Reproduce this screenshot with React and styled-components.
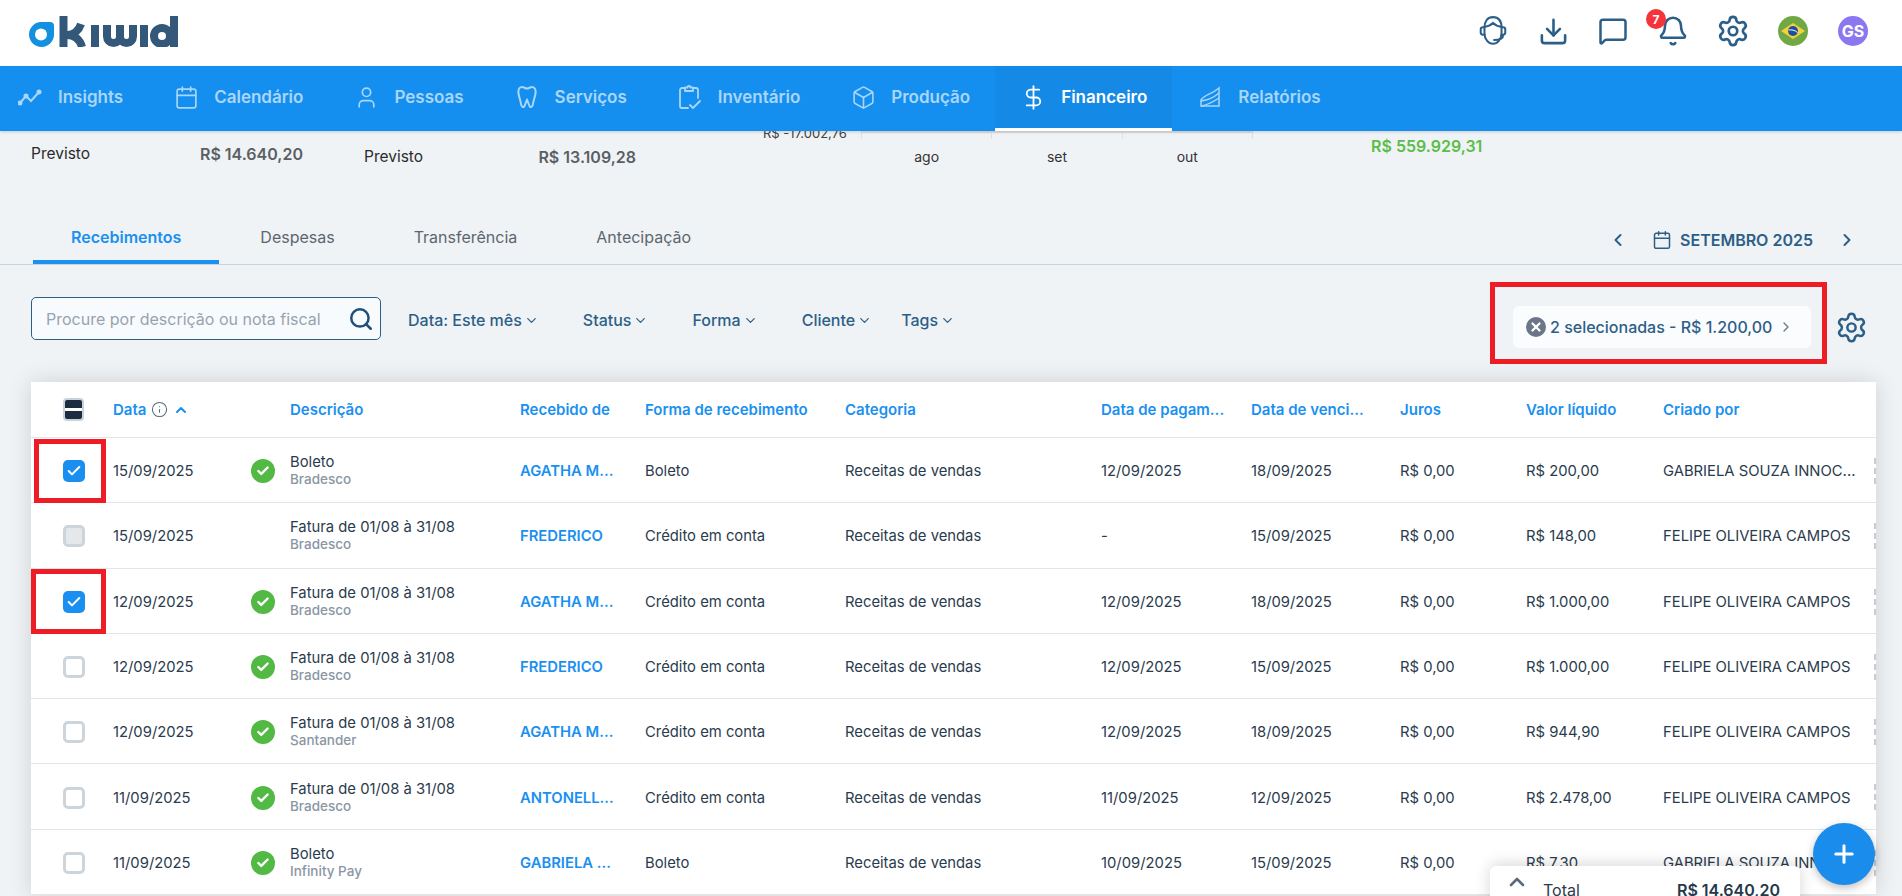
import React from 'react'
import styled, { createGlobalStyle } from 'styled-components'
import {
  Bell, Box, Calendar, Check, ChevronDown, ChevronLeft, ChevronRight, ChevronUp,
  DollarSign, Download, Info, MessageSquare, Plus, Search, Settings, User, X,
} from 'lucide-react'

const GlobalStyle = createGlobalStyle`
  html, body { margin: 0; height: 100%; overflow: hidden; }
  body { background: #f0f3f5; font-family: Inter, "Liberation Sans", sans-serif; color: #2a3b4d; }
  * { box-sizing: border-box; }
  svg { flex-shrink: 0; }
`

const Page = styled.div`
  position: relative;
  height: 896px;
  overflow: hidden;
`

const TopBar = styled.header`
  height: 66px;
  background: #fff;
  display: flex;
  align-items: flex-start;
  justify-content: space-between;
  padding: 16px 34px 0 28px;
`

const TopActions = styled.div`
  display: flex;
  gap: 30px;
  color: #2c5f88;
`

const TopIcon = styled.div`
  position: relative;
  width: 30px;
  height: 30px;
  display: flex;
  align-items: center;
  justify-content: center;
`

const Badge = styled.span`
  position: absolute;
  top: -7px;
  left: -12px;
  width: 20px;
  height: 20px;
  border-radius: 50%;
  background: #f5333a;
  color: #fff;
  font-size: 12px;
  font-weight: 700;
  display: flex;
  align-items: center;
  justify-content: center;
`

const Avatar = styled.div`
  width: 30px;
  height: 30px;
  border-radius: 50%;
  background: #8b78f0;
  color: #fff;
  font-size: 16px;
  font-weight: 700;
  display: flex;
  align-items: center;
  justify-content: center;
`

const Nav = styled.nav`
  position: relative;
  z-index: 2;
  height: 65px;
  background: #158fef;
  display: flex;
  padding-left: 18px;
  box-shadow: 0 1px 3px rgba(0, 0, 0, 0.16);
`

const NavItem = styled.a`
  display: flex;
  align-items: center;
  gap: 16px;
  padding: 0 25px 0 26px;
  font-size: 17px;
  font-weight: 600;
  color: ${({ $active }) => ($active ? '#fff' : '#a9d6fb')};
  background: ${({ $active }) => ($active ? '#1589e6' : 'transparent')};
  border-bottom: 3px solid ${({ $active }) => ($active ? '#fff' : 'transparent')};

  &:first-child { padding-left: 0; }
`

const NavIconBox = styled.span`
  width: 24px;
  display: flex;
  justify-content: center;
`

const SummaryStrip = styled.section`
  height: 79px;
  overflow: hidden;
  display: flex;
  align-items: flex-start;
  padding-left: 31px;
`

const SummaryPair = styled.div`
  width: 272px;
  display: flex;
  justify-content: space-between;
  padding-top: ${({ $top }) => $top}px;
  margin-right: ${({ $gap }) => $gap}px;
  font-size: 15.5px;
  line-height: 20px;
  color: #2b2b2b;
`

const SummaryValue = styled.span`
  font-size: 16px;
  font-weight: 600;
  color: #5a5f66;
`

const ClippedValue = styled.div`
  width: 98px;
  margin-top: -6px;
  font-size: 13px;
  line-height: 16px;
  color: #444;
`

const ChartAxis = styled.div`
  width: 392px;
  display: flex;
  margin-right: 118px;
`

const ChartCell = styled.div`
  flex: 1;
  height: 8px;
  border-top: 2px solid #dedfe1;
  border-left: 1px solid #dedfe1;
  position: relative;

  &:last-child { border-right: 1px solid #dedfe1; }
`

const ChartLabel = styled.span`
  position: absolute;
  top: 16px;
  left: 0;
  right: 0;
  text-align: center;
  font-size: 14px;
  line-height: 16px;
  color: #333;
`

const GreenValue = styled.div`
  padding-top: 5px;
  font-size: 16px;
  font-weight: 600;
  line-height: 20px;
  color: #5bbd4a;
`

const TabBar = styled.div`
  height: 55px;
  border-bottom: 1px solid #c8d2da;
  display: flex;
  align-items: stretch;
  justify-content: space-between;
  padding: 0 45px 0 33px;
`

const Tabs = styled.div`
  display: flex;
  gap: 3px;
`

const Tab = styled.a`
  padding: 0 38px 7px;
  display: flex;
  align-items: flex-end;
  height: 100%;
  font-size: 16px;
  line-height: 32px;
  font-weight: ${({ $active }) => ($active ? 600 : 400)};
  color: ${({ $active }) => ($active ? '#1a90f0' : '#5d6670')};
  border-bottom: 4px solid ${({ $active }) => ($active ? '#1a90f0' : 'transparent')};
  margin-bottom: -1px;
`

const MonthPicker = styled.div`
  display: flex;
  align-items: center;
  color: #2c5f88;
  font-size: 16px;
  font-weight: 600;
  padding-top: 5px;
`

const MonthLabel = styled.span`
  display: flex;
  align-items: center;
  gap: 8px;
  margin: 0 24px;
`

const FilterRow = styled.div`
  height: 117px;
  display: flex;
  align-items: flex-start;
  padding: 32px 37px 0 31px;
`

const SearchBox = styled.div`
  width: 350px;
  height: 43px;
  border: 1px solid #2c5f88;
  border-radius: 5px;
  background: #f8fbfd;
  display: flex;
  align-items: center;
  justify-content: space-between;
  padding: 0 6px 0 14px;
  margin-right: 27px;
  color: #1f4f78;
`

const Placeholder = styled.span`
  font-size: 16px;
  color: #98a2b0;
`

const Filters = styled.div`
  display: flex;
  gap: 44px;
  margin-top: 13px;
`

const Filter = styled.span`
  display: flex;
  align-items: center;
  gap: 2px;
  font-size: 16px;
  line-height: 20px;
  font-weight: 500;
  color: #2c5f88;

  &:last-child { margin-left: -15px; }
`

const SelectionChip = styled.div`
  position: relative;
  margin: 9px 24px 0 auto;
  width: 298px;
  height: 42px;
  border-radius: 6px;
  background: #fbfcfe;
  display: flex;
  align-items: center;
  padding-left: 13px;
  font-size: 16px;
  font-weight: 500;
  color: #2c5f88;
`

const ClearDot = styled.span`
  width: 20px;
  height: 20px;
  border-radius: 50%;
  background: #6b7689;
  color: #fff;
  display: flex;
  align-items: center;
  justify-content: center;
  margin-right: 4px;
`

const ChipChevron = styled.span`
  margin-left: 6px;
  display: flex;
  color: #6b7689;
`

const ChipHighlight = styled.span`
  position: absolute;
  top: -24px;
  left: -23px;
  right: -16px;
  bottom: -16px;
  border: 5px solid #ee1c25;
  pointer-events: none;
`

const GearButton = styled.span`
  margin-top: 14px;
  margin-right: -3px;
  color: #2c5f88;
  display: flex;
`

const Table = styled.div`
  margin: 0 26px 0 31px;
  background: #fff;
  box-shadow: 0 0 22px rgba(0, 0, 0, 0.14);
`

const columns = '82px 137px 40px 230px 125px 200px 256px 150px 149px 126px 137px 213px'

const HeadRow = styled.div`
  display: grid;
  grid-template-columns: ${columns};
  height: 56px;
  align-items: center;
  border-bottom: 1px solid #e3e6e8;
  font-size: 15px;
  font-weight: 600;
  color: #1a90f0;
`

const HeadCell = styled.span`
  display: flex;
  align-items: center;
  gap: 5px;
  white-space: nowrap;
`

const Row = styled.div`
  position: relative;
  display: grid;
  grid-template-columns: ${columns};
  height: 65.3px;
  padding-top: 2px;
  align-items: center;
  border-bottom: 1px solid #e3e6e8;
  font-size: 14.8px;
  color: #2a3b4d;

  &::after {
    content: '';
    position: absolute;
    right: 0;
    top: 20px;
    height: 26px;
    border-right: 2px dashed #c9cdd1;
  }
`

const CheckCell = styled.div`
  position: relative;
  align-self: stretch;
  display: flex;
  align-items: center;
  padding-left: 32px;
`

const CheckBox = styled.span`
  width: 22px;
  height: 22px;
  border-radius: 5px;
  display: flex;
  align-items: center;
  justify-content: center;
  color: #fff;
  background: ${({ $state }) => ({ on: '#1a8ff0', off: '#fff', disabled: '#e4e8ea' }[$state])};
  border: ${({ $state }) => ($state === 'on' ? 'none' : '3px solid #cdd5dc')};
`

const MixedBox = styled.span`
  width: 21px;
  height: 23px;
  border-radius: 4px;
  border: 2px solid #c9d2da;
  background: linear-gradient(#1c2b3f 0 44%, #fff 44% 56%, #1c2b3f 56% 100%);
`

const RowHighlight = styled.span`
  position: absolute;
  top: ${({ $top }) => $top}px;
  bottom: -1px;
  left: ${({ $left }) => $left}px;
  width: ${({ $width }) => $width}px;
  border: 5px solid #ee1c25;
  pointer-events: none;
`

const StatusDot = styled.span`
  width: 24px;
  height: 24px;
  margin-left: 1px;
  border-radius: 50%;
  background: #52b944;
  color: #fff;
  display: flex;
  align-items: center;
  justify-content: center;
`

const Description = styled.div`
  line-height: 17px;
`

const SubText = styled.div`
  font-size: 13.5px;
  font-weight: 500;
  color: #8a96a3;
`

const ClientLink = styled.span`
  font-weight: 600;
  color: #1a90f0;
`

const TotalBar = styled.div`
  position: absolute;
  left: 1490px;
  top: 866px;
  width: 310px;
  height: 40px;
  background: #fff;
  border-radius: 6px 6px 0 0;
  box-shadow: 0 -2px 16px rgba(0, 0, 0, 0.16);
  display: flex;
  align-items: flex-start;
  padding: 4px 20px 0 15px;
  color: #5b6a7a;
`

const TotalLabel = styled.span`
  margin: 10px 0 0 14px;
  font-size: 16px;
  line-height: 20px;
  color: #2a3b4d;
`

const TotalValue = styled.span`
  margin: 10px 0 0 auto;
  font-size: 16px;
  line-height: 20px;
  font-weight: 600;
  color: #24384c;
`

const Fab = styled.div`
  position: absolute;
  left: 1813px;
  top: 823px;
  width: 62px;
  height: 62px;
  border-radius: 50%;
  background: #1a8ceb;
  color: #fff;
  display: flex;
  align-items: center;
  justify-content: center;
  box-shadow: 0 3px 8px rgba(0, 0, 0, 0.25);
`

const KiwidLogo = () => (
  <svg width="151" height="31" viewBox="0 0 151 31" fill="none">
    <path d="M13 6H22Q26 6 26 10V18.500A12.500 12.500 0 1 1 13 6Z" fill="#1490e0" />
    <circle cx="13" cy="18.500" r="6" fill="#fff" />
    <g stroke="#34587a" strokeWidth="8" strokeLinecap="butt">
      <path d="M35.500 0V31" />
      <path d="M39 19C46 19 51 14 53 8" />
      <path d="M39 19C47 19 52 24 54 31" />
      <path d="M67 9V31" />
      <path d="M79 9V20.500a6.500 6.500 0 0 0 13 0V9V20.500a6.500 6.500 0 0 0 13 0V9" />
      <path d="M116 9V31" />
      <circle cx="134" cy="20" r="8" />
      <path d="M146 0V31" />
    </g>
  </svg>
)

const HeadsetFace = () => (
  <svg width="32" height="32" viewBox="0 0 30 30" fill="none" stroke="currentColor" strokeWidth="1.900" strokeLinecap="round">
    <path d="M7 12C7 5.500 10 2 15 2s8 3.500 8 10v5c0 6-4 10-8 10s-8-4-8-10Z" />
    <path d="M7 11c4-.5 6-1.500 8-3.500 2 2 4 3 8 3.500" />
    <path d="M7 11.500H5.500a2 2 0 0 0-2 2v3a2 2 0 0 0 2 2H7M23 11.500h1.500a2 2 0 0 1 2 2v3a2 2 0 0 1-2 2H23" />
    <path d="M24.500 19c0 3-3.500 4.500-8.500 4.500" />
  </svg>
)

const BrazilFlag = () => (
  <svg width="30" height="30" viewBox="0 0 30 30">
    <circle cx="15" cy="15" r="15" fill="#6fa845" />
    <path d="M15 7L27 15L15 23L3 15Z" fill="#f6d13d" />
    <circle cx="15" cy="15" r="5" fill="#1c4f9c" />
    <path d="M10.500 14C13 13.500 17 14 19.500 16.500" stroke="#fff" strokeWidth="1" fill="none" />
  </svg>
)

const InsightsIcon = () => (
  <svg width="24" height="20" viewBox="0 0 24 20" fill="none" stroke="currentColor" strokeWidth="2">
    <path d="M2 16L8 9L13 14L21 5" />
    <circle cx="2" cy="16" r="1.500" fill="currentColor" />
    <circle cx="8" cy="9" r="1.500" fill="currentColor" />
    <circle cx="21" cy="5" r="1.500" fill="currentColor" />
  </svg>
)

const ToothIcon = () => (
  <svg width="20" height="26" viewBox="0 0 20 26" fill="none" stroke="currentColor" strokeWidth="2" strokeLinejoin="round">
    <path d="M5 3C2 3 1 6 1.500 9.500C2 13 3.500 16 4 20C4.300 23 6.500 24 7.500 22L10 15.500L12.500 22C13.500 24 15.700 23 16 20C16.500 16 18 13 18.500 9.500C19 6 18 3 15 3C13 3 12 4.500 10 4.500C8 4.500 7 3 5 3Z" />
  </svg>
)

const ClipboardTickIcon = () => (
  <svg width="25" height="26" viewBox="0 0 25 26" fill="none" stroke="currentColor" strokeWidth="1.800" strokeLinecap="round" strokeLinejoin="round">
    <path d="M8 4H5a2 2 0 0 0-2 2v16a2 2 0 0 0 2 2h6" />
    <path d="M16 4h3a2 2 0 0 1 2 2v8" />
    <path d="M8 3.500h2.500a1.500 1.500 0 0 1 3 0H16V7H8Z" />
    <path d="M13 21l3 3 7-7" />
  </svg>
)

const ReportIcon = () => (
  <svg width="22" height="22" viewBox="0 0 22 22" fill="none" stroke="currentColor" strokeWidth="1.500">
    <path d="M2 20V14C6 8 12 9 20 2V20H2Z" />
    <path d="M2 15C8 14 13 13 20 7M2 20C8 19 14 16 20 12" />
  </svg>
)

const navItems = [
  { label: 'Insights', icon: <InsightsIcon /> },
  { label: 'Calendário', icon: <Calendar size={25} strokeWidth={1.6} /> },
  { label: 'Pessoas', icon: <User size={25} strokeWidth={1.6} /> },
  { label: 'Serviços', icon: <ToothIcon /> },
  { label: 'Inventário', icon: <ClipboardTickIcon /> },
  { label: 'Produção', icon: <Box size={25} strokeWidth={1.5} /> },
  { label: 'Financeiro', icon: <DollarSign size={27} strokeWidth={1.6} />, active: true },
  { label: 'Relatórios', icon: <ReportIcon /> },
]

const felipe = 'FELIPE OLIVEIRA CAMPOS'
const fatura = 'Fatura de 01/08 à 31/08'
const credito = 'Crédito em conta'

const rows = [
  { date: '15/09/2025', paid: true, desc: 'Boleto', bank: 'Bradesco', client: 'AGATHA M...', form: 'Boleto', pay: '12/09/2025', due: '18/09/2025', value: 'R$ 200,00', by: 'GABRIELA SOUZA INNOC...', check: 'on', mark: { top: -1, left: 3, width: 72 } },
  { date: '15/09/2025', desc: fatura, bank: 'Bradesco', client: 'FREDERICO', form: credito, pay: '-', due: '15/09/2025', value: 'R$ 148,00', by: felipe, check: 'disabled' },
  { date: '12/09/2025', paid: true, desc: fatura, bank: 'Bradesco', client: 'AGATHA M...', form: credito, pay: '12/09/2025', due: '18/09/2025', value: 'R$ 1.000,00', by: felipe, check: 'on', mark: { top: -2, left: 0, width: 75 } },
  { date: '12/09/2025', paid: true, desc: fatura, bank: 'Bradesco', client: 'FREDERICO', form: credito, pay: '12/09/2025', due: '15/09/2025', value: 'R$ 1.000,00', by: felipe, check: 'off' },
  { date: '12/09/2025', paid: true, desc: fatura, bank: 'Santander', client: 'AGATHA M...', form: credito, pay: '12/09/2025', due: '18/09/2025', value: 'R$ 944,90', by: felipe, check: 'off' },
  { date: '11/09/2025', paid: true, desc: fatura, bank: 'Bradesco', client: 'ANTONELL...', form: credito, pay: '11/09/2025', due: '12/09/2025', value: 'R$ 2.478,00', by: felipe, check: 'off' },
  { date: '11/09/2025', paid: true, desc: 'Boleto', bank: 'Infinity Pay', client: 'GABRIELA ...', form: 'Boleto', pay: '10/09/2025', due: '15/09/2025', value: 'R$ 7,30', by: 'GABRIELA SOUZA INNOC...', check: 'off' },
]

const headers = ['Recebido de', 'Forma de recebimento', 'Categoria', 'Data de pagam...', 'Data de venci...', 'Juros', 'Valor líquido', 'Criado por']

const App = () => {
  return (
    <Page>
      <GlobalStyle />
      <TopBar>
        <KiwidLogo />
        <TopActions>
          <TopIcon><HeadsetFace /></TopIcon>
          <TopIcon><Download size={31} strokeWidth={2} /></TopIcon>
          <TopIcon><MessageSquare size={30} strokeWidth={2} /></TopIcon>
          <TopIcon>
            <Bell size={32} strokeWidth={1.9} />
            <Badge>7</Badge>
          </TopIcon>
          <TopIcon><Settings size={34} strokeWidth={1.9} /></TopIcon>
          <TopIcon><BrazilFlag /></TopIcon>
          <Avatar>GS</Avatar>
        </TopActions>
      </TopBar>

      <Nav>
        {navItems.map((item) => (
          <NavItem key={item.label} $active={item.active}>
            <NavIconBox>{item.icon}</NavIconBox>
            {item.label}
          </NavItem>
        ))}
      </Nav>

      <SummaryStrip>
        <SummaryPair $top={13} $gap={61}>
          <span>Previsto</span>
          <SummaryValue>R$ 14.640,20</SummaryValue>
        </SummaryPair>
        <SummaryPair $top={16} $gap={127}>
          <span>Previsto</span>
          <SummaryValue>R$ 13.109,28</SummaryValue>
        </SummaryPair>
        <ClippedValue>R$ -17.002,76</ClippedValue>
        <ChartAxis>
          {['ago', 'set', 'out'].map((month) => (
            <ChartCell key={month}>
              <ChartLabel>{month}</ChartLabel>
            </ChartCell>
          ))}
        </ChartAxis>
        <GreenValue>R$ 559.929,31</GreenValue>
      </SummaryStrip>

      <TabBar>
        <Tabs>
          <Tab $active>Recebimentos</Tab>
          <Tab>Despesas</Tab>
          <Tab>Transferência</Tab>
          <Tab>Antecipação</Tab>
        </Tabs>
        <MonthPicker>
          <ChevronLeft size={20} strokeWidth={2.4} />
          <MonthLabel>
            <Calendar size={20} strokeWidth={1.8} />
            SETEMBRO 2025
          </MonthLabel>
          <ChevronRight size={20} strokeWidth={2.4} />
        </MonthPicker>
      </TabBar>

      <FilterRow>
        <SearchBox>
          <Placeholder>Procure por descrição ou nota fiscal</Placeholder>
          <Search size={26} strokeWidth={2.3} />
        </SearchBox>
        <Filters>
          {['Data: Este mês', 'Status', 'Forma', 'Cliente', 'Tags'].map((name) => (
            <Filter key={name}>
              {name}
              <ChevronDown size={15} strokeWidth={2} />
            </Filter>
          ))}
        </Filters>
        <SelectionChip>
          <ClearDot><X size={14} strokeWidth={4} /></ClearDot>
          2 selecionadas - R$ 1.200,00
          <ChipChevron><ChevronRight size={16} strokeWidth={2} /></ChipChevron>
          <ChipHighlight />
        </SelectionChip>
        <GearButton><Settings size={33} strokeWidth={1.8} /></GearButton>
      </FilterRow>

      <Table>
        <HeadRow>
          <CheckCell><MixedBox /></CheckCell>
          <HeadCell>
            Data
            <Info size={17} strokeWidth={1.5} color="#5b6a7a" />
            <ChevronUp size={16} strokeWidth={3} />
          </HeadCell>
          <span />
          <HeadCell>Descrição</HeadCell>
          {headers.map((title) => (
            <HeadCell key={title}>{title}</HeadCell>
          ))}
        </HeadRow>
        {rows.map((row, index) => (
          <Row key={index}>
            <CheckCell>
              <CheckBox $state={row.check}>
                {row.check === 'on' && <Check size={16} strokeWidth={3} />}
              </CheckBox>
              {row.mark && <RowHighlight $top={row.mark.top} $left={row.mark.left} $width={row.mark.width} />}
            </CheckCell>
            <span>{row.date}</span>
            <span>
              {row.paid && <StatusDot><Check size={14} strokeWidth={4} /></StatusDot>}
            </span>
            <Description>
              {row.desc}
              <SubText>{row.bank}</SubText>
            </Description>
            <ClientLink>{row.client}</ClientLink>
            <span>{row.form}</span>
            <span>Receitas de vendas</span>
            <span>{row.pay}</span>
            <span>{row.due}</span>
            <span>R$ 0,00</span>
            <span>{row.value}</span>
            <span>{row.by}</span>
          </Row>
        ))}
      </Table>

      <TotalBar>
        <ChevronUp size={24} strokeWidth={2.6} />
        <TotalLabel>Total</TotalLabel>
        <TotalValue>R$ 14.640,20</TotalValue>
      </TotalBar>
      <Fab><Plus size={28} strokeWidth={2.6} /></Fab>
    </Page>
  )
}

export default App
